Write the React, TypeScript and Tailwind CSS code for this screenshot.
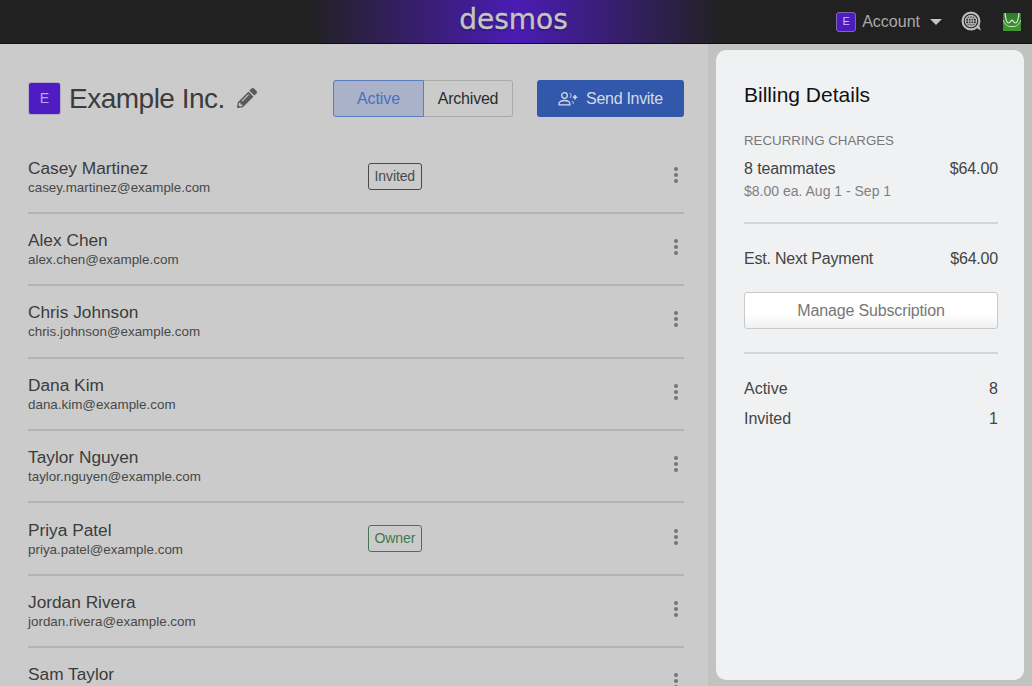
import { FaPencilAlt } from 'react-icons/fa';

const members = [
  { name: 'Casey Martinez', email: 'casey.martinez@example.com', badge: 'Invited' },
  { name: 'Alex Chen', email: 'alex.chen@example.com' },
  { name: 'Chris Johnson', email: 'chris.johnson@example.com' },
  { name: 'Dana Kim', email: 'dana.kim@example.com' },
  { name: 'Taylor Nguyen', email: 'taylor.nguyen@example.com' },
  { name: 'Priya Patel', email: 'priya.patel@example.com', badge: 'Owner' },
  { name: 'Jordan Rivera', email: 'jordan.rivera@example.com' },
  { name: 'Sam Taylor', email: 'sam.taylor@example.com' },
];

function GlobeIcon() {
  return (
    <svg width="21" height="21" viewBox="0 0 21 21" fill="none" stroke="#bdbdbd">
      <circle cx="10" cy="10" r="8.4" strokeWidth="2.200" />
      <circle cx="10" cy="10" r="5.600" strokeWidth="1.200" />
      <ellipse cx="10" cy="10" rx="2.400" ry="5.600" strokeWidth="1" />
      <path d="M4.400 10h11.200M5.200 7.300h9.600M5.200 12.700h9.600M10 4.400v11.200" strokeWidth="1" />
      <path d="M14.500 16.500l5.500 3-2-5.500z" fill="#bdbdbd" stroke="none" />
    </svg>
  );
}

function GraphIcon() {
  return (
    <svg width="18" height="18" viewBox="0 0 18 18" fill="none">
      <defs>
        <linearGradient id="graphBg" x1="0" y1="0" x2="0" y2="1">
          <stop offset="0" stopColor="#2f7a28" />
          <stop offset="1" stopColor="#3f9a30" />
        </linearGradient>
      </defs>
      <rect width="18" height="18" rx="1" fill="url(#graphBg)" />
      <path d="M2 0c.5 5 1.500 10 3.500 10S8 7 9 7s1.500 3 3.500 3S15.500 5 16 0" stroke="#dfe9dc" strokeWidth="1.200" />
      <path d="M0 7c2 4.500 4.500 6.500 7 6.500h4c2.500 0 5-2 7-6.500" stroke="#cfe0cb" strokeWidth="1" />
    </svg>
  );
}

function InviteIcon() {
  return (
    <svg width="20" height="14" viewBox="0 0 20 14" fill="none" stroke="#d3daea" strokeWidth="1.300">
      <circle cx="6.500" cy="3.500" r="2.800" />
      <path d="M1 12.800c-.2-2.800 2-4.300 5.500-4.300s5.700 1.500 5.500 4.300z" />
      <path d="M12 1.200a3 3 0 0 1 0 4.600M14.400 9c.6.700.9 1.600.9 2.800" strokeWidth="1" />
      <path d="M17 3v4.500M14.800 5.200h4.400" strokeWidth="1.600" />
    </svg>
  );
}

function Dots() {
  return (
    <div className="flex flex-col gap-[2px]">
      <span className="w-1 h-1 rounded-full bg-[#757575]" />
      <span className="w-1 h-1 rounded-full bg-[#757575]" />
      <span className="w-1 h-1 rounded-full bg-[#757575]" />
    </div>
  );
}

export default function App() {
  return (
    <div className="h-screen flex flex-col overflow-hidden bg-[#c1c3c1] font-['Liberation_Sans',Arial,sans-serif]">
      <header className="h-11 shrink-0 flex items-center justify-end relative border-b border-[#0f0f0f] bg-[linear-gradient(90deg,#212121_30%,#4a1cb4_50%,#212121_70%)]">
        <div className="absolute inset-0 flex items-center justify-center pb-[4px] pr-[5px]">
          <span className="font-['DejaVu_Sans',sans-serif] text-[28px] leading-none text-[#c4c4c4] [-webkit-text-stroke:0.4px_#c4c4c4] [text-shadow:0_1px_2px_rgba(0,0,0,0.6)]">desmos</span>
        </div>
        <div className="relative flex items-center pr-[11px]">
          <span className="w-5 h-5 flex items-center justify-center rounded-[3px] border border-[#7a6aa8] bg-[#4d1cc0] text-[11px] text-[#c9bdec]">E</span>
          <span className="ml-[6px] text-[16px] text-[#a9a9a9]">Account</span>
          <span className="ml-[10px] w-0 h-0 border-x-[6px] border-x-transparent border-t-[6px] border-t-[#c4c4c4]" />
          <span className="ml-[19px] flex"><GlobeIcon /></span>
          <span className="ml-[21px] flex"><GraphIcon /></span>
        </div>
      </header>

      <div className="flex-1 flex min-h-0">
        <main className="w-[708px] shrink-0 bg-[#cbcbcb] pl-7 pr-6 overflow-hidden">
          <div className="h-[97.5px] flex items-start pt-9">
            <span className="mt-[2px] w-[33px] h-[33px] flex items-center justify-center rounded-[3px] border border-[#b3aec4] bg-[#4f1cc4] text-[14px] text-[#b9a5ea]">E</span>
            <h1 className="ml-2 mt-[1px] text-[28px] leading-[36px] tracking-[-0.5px] text-[#3c3c3c]">Example Inc.</h1>
            <FaPencilAlt className="ml-[12px] mt-[8px] text-[#595959]" size={20} />
            <div className="ml-auto flex">
              <button className="w-[91px] h-[37px] pt-[1px] rounded-l-[3px] border border-[#5a7cc0] bg-[#a9b2c8] text-[16px] tracking-[-0.1px] text-[#4a6fc0]">Active</button>
              <button className="w-[89px] h-[37px] pt-[1px] rounded-r-[3px] border border-l-0 border-[#aaaaaa] text-[16px] tracking-[-0.2px] text-[#2c2c2c]">Archived</button>
            </div>
            <button className="ml-6 w-[147px] h-[37px] pt-[1px] flex items-center justify-center gap-2 rounded-[3px] bg-[#3158ab] text-[16px] tracking-[-0.3px] text-[#d3daea]">
              <InviteIcon />
              Send Invite
            </button>
          </div>
          <div className="flex flex-col">
            {members.map((m) => (
              <div key={m.email} className="h-[72.4px] shrink-0 flex items-center border-b-2 border-[#b4b4b4] pb-[1px]">
                <div className="w-[340px]">
                  <div className="text-[17.3px] leading-[22px] text-[#3c3c3c]">{m.name}</div>
                  <div className="text-[13.4px] leading-[17px] text-[#484848]">{m.email}</div>
                </div>
                {m.badge && (
                  <span
                    className={
                      m.badge === 'Owner'
                        ? 'h-[27px] px-[5.5px] flex items-center rounded-[3px] border border-[#43784d] text-[14px] tracking-[-0.1px] text-[#43784d]'
                        : 'h-[27px] px-[5.5px] flex items-center rounded-[3px] border border-[#4a4a4a] text-[14px] tracking-[-0.1px] text-[#4a4a4a]'
                    }
                  >
                    {m.badge}
                  </span>
                )}
                <div className="ml-auto pr-[6px] mb-[3px]">
                  <Dots />
                </div>
              </div>
            ))}
          </div>
        </main>

        <aside className="flex-1 py-[6px] pl-2 pr-2">
          <div className="h-full rounded-[10px] bg-[#f0f1f3] pl-7 pr-[26px] pt-[31px]">
            <h2 className="text-[21px] leading-[28px] text-[#111111]">Billing Details</h2>
            <div className="mt-[23px] text-[13.300px] leading-[17px] text-[#777777]">RECURRING CHARGES</div>
            <div className="mt-[10px] flex justify-between text-[16px] leading-[20px] tracking-[-0.1px] text-[#444444]">
              <span>8 teammates</span>
              <span>$64.00</span>
            </div>
            <div className="mt-[4px] text-[14px] leading-[17px] text-[#808080]">$8.00 ea. Aug 1 - Sep 1</div>
            <div className="mt-[22px] border-t-2 border-[#d4d5d7]" />
            <div className="mt-[25px] flex justify-between text-[16px] leading-[20px] tracking-[-0.2px] text-[#444444]">
              <span>Est. Next Payment</span>
              <span>$64.00</span>
            </div>
            <button className="mt-[23px] w-full h-[37px] pt-[1px] rounded-[3px] border border-[#c8c9cb] bg-[linear-gradient(#ffffff_60%,#f0f0f0)] text-[16px] tracking-[-0.15px] text-[#777777]">Manage Subscription</button>
            <div className="mt-[23px] border-t-2 border-[#d4d5d7]" />
            <div className="mt-[25px] flex justify-between text-[16px] leading-[20px] text-[#444444]">
              <span>Active</span>
              <span>8</span>
            </div>
            <div className="mt-[10px] flex justify-between text-[16px] leading-[20px] text-[#444444]">
              <span>Invited</span>
              <span>1</span>
            </div>
          </div>
        </aside>
      </div>
    </div>
  );
}
